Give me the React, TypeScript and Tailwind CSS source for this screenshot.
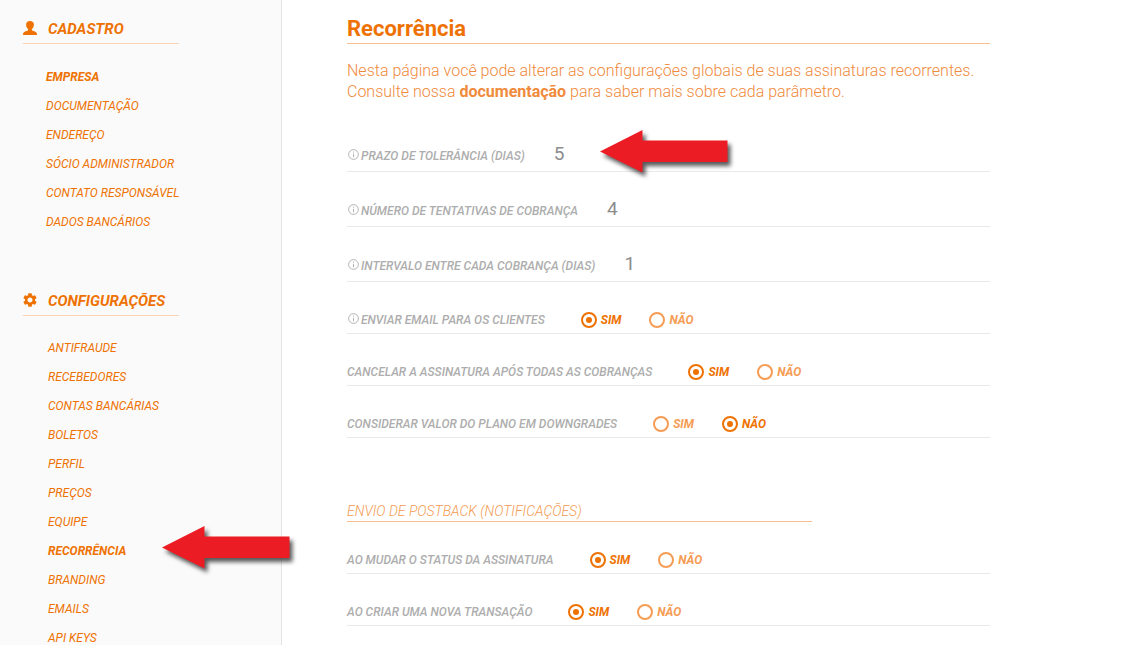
import React, { useState } from 'react';
import { MdSettings } from 'react-icons/md';

interface MenuSectionProps {
  title: string;
  icon: React.ReactNode;
  items: string[];
  active: string;
  pointed?: string;
  listClassName: string;
}

interface RadioRowProps {
  name: string;
  label: string;
  initial: 'sim' | 'nao';
  info?: boolean;
}

interface ValueRowProps {
  name: string;
  label: string;
  initial: string;
  pointed?: boolean;
}

const PersonIcon: React.FC = () => (
  <svg viewBox="0 0 14 14" className="h-[14px] w-[14px]" fill="currentColor" aria-hidden="true">
    <path d="M7 0C4.600 0 3.100 1.400 3.100 3.600c0 1.700.6 3.300 1.700 4.200.3.3.4.8.3 1.200-.1.5-.5.7-1.200 1C2.300 10.500.6 10.900.2 12.200c-.2.6-.2 1.200-.2 1.800h14c0-.6 0-1.200-.2-1.800-.4-1.300-2.100-1.700-3.700-2.200-.7-.3-1.100-.5-1.200-1-.1-.4 0-.9.3-1.200 1.100-.9 1.700-2.500 1.700-4.200C10.900 1.400 9.400 0 7 0z" />
  </svg>
);

const Arrow: React.FC = () => (
  <svg
    viewBox="0 0 136 50"
    className="h-[50px] w-[136px]"
    style={{ filter: 'drop-shadow(3px 4px 2px rgba(0, 0, 0, 0.65))' }}
    aria-hidden="true"
  >
    <path d="M0 21.500 42.500 0v10.500H127.500v21.500H42.500v10.500z" fill="#ec1c24" />
  </svg>
);

const InfoIcon: React.FC = () => (
  <svg viewBox="0 0 12 12" className="mb-1 ml-px mr-[2px] h-[11px] w-[11px]" fill="none" stroke="currentColor" aria-hidden="true">
    <circle cx="6" cy="6" r="5.3" />
    <path d="M6 5.200v3.800" />
    <circle cx="6" cy="3.400" r="0.7" fill="currentColor" stroke="none" />
  </svg>
);

const MenuSection: React.FC<MenuSectionProps> = ({ title, icon, items, active, pointed, listClassName }) => (
  <section>
    <h2 className="mx-[23px] flex h-7 w-[156px] items-center gap-[11px] border-b border-b-[#fbd3b4] text-[15px] font-bold italic text-[#ee7203]">
      <span className="shrink-0 pb-[3px]">{icon}</span>
      {title}
    </h2>
    <ul className={listClassName}>
      {items.map((item) => (
        <li key={item} className="relative h-[29px] leading-[29px]">
          <a href="#" className={item === active ? 'font-bold' : ''}>
            {item}
          </a>
          {item === pointed && (
            <span className="absolute -top-[11px] left-[114px] z-10">
              <Arrow />
            </span>
          )}
        </li>
      ))}
    </ul>
  </section>
);

const ValueRow: React.FC<ValueRowProps> = ({ name, label, initial, pointed }) => {
  const [value, setValue] = useState(initial);

  return (
    <div className="relative flex h-[55px] items-end border-b border-b-[#e9e9e9] pb-[3px]">
      <label htmlFor={name} className="flex h-6 items-center italic">
        <InfoIcon />
        {label}
      </label>
      <input
        id={name}
        value={value}
        onChange={(e) => setValue(e.target.value)}
        className="ml-[29px] h-7 w-8 text-[19px] font-normal text-[#8c8c8c] outline-none"
      />
      {pointed && (
        <span className="absolute left-[253px] top-[13px] z-10">
          <Arrow />
        </span>
      )}
    </div>
  );
};

const RadioRow: React.FC<RadioRowProps> = ({ name, label, initial, info }) => {
  const [value, setValue] = useState(initial);
  const options = [
    { id: 'sim', text: 'SIM' },
    { id: 'nao', text: 'NÃO' },
  ] as const;

  return (
    <div
      role="radiogroup"
      aria-labelledby={`${name}-label`}
      className="flex h-[52px] items-end border-b border-b-[#e9e9e9] pb-px italic"
    >
      <span id={`${name}-label`} className="flex h-6 items-center">
        {info && <InfoIcon />}
        {label}
      </span>
      <div className="ml-9 flex gap-7">
        {options.map((option) => (
          <label
            key={option.id}
            className={`flex h-6 items-center gap-1 font-bold ${value === option.id ? 'text-[#ee7203]' : 'text-[#f59c55]'}`}
          >
            <input
              type="radio"
              name={name}
              checked={value === option.id}
              onChange={() => setValue(option.id)}
              className="grid h-4 w-4 appearance-none place-items-center rounded-full border-2 border-current before:h-1.5 before:w-1.5 before:rounded-full checked:before:bg-current"
            />
            {option.text}
          </label>
        ))}
      </div>
    </div>
  );
};

const App: React.FC = () => (
  <div className="flex h-screen overflow-hidden bg-white font-[Roboto,sans-serif]">
    <nav className="w-[282px] shrink-0 border-r border-[#e4e4e4] bg-[#fafafa] pt-4 text-[12px] italic text-[#ee7203]">
      <MenuSection
        title="CADASTRO"
        icon={<PersonIcon />}
        active="EMPRESA"
        listClassName="mb-[51px] ml-[46px] mt-[19px]"
        items={['EMPRESA', 'DOCUMENTAÇÃO', 'ENDEREÇO', 'SÓCIO ADMINISTRADOR', 'CONTATO RESPONSÁVEL', 'DADOS BANCÁRIOS']}
      />
      <MenuSection
        title="CONFIGURAÇÕES"
        icon={<MdSettings viewBox="2 2 20 20" className="h-[14px] w-[14px]" />}
        active="RECORRÊNCIA"
        pointed="RECORRÊNCIA"
        listClassName="ml-[48px] mt-[18px]"
        items={[
          'ANTIFRAUDE',
          'RECEBEDORES',
          'CONTAS BANCÁRIAS',
          'BOLETOS',
          'PERFIL',
          'PREÇOS',
          'EQUIPE',
          'RECORRÊNCIA',
          'BRANDING',
          'EMAILS',
          'API KEYS',
        ]}
      />
    </nav>
    <main className="min-w-0 flex-1 pl-[65px] pr-8 pt-[14px]">
      <div className="max-w-[643px] text-[12px] font-medium text-[#adadad]">
        <h1 className="h-[30px] border-b border-b-[#f9bf90] text-[22px] font-bold leading-[30px] text-[#ee7203]">
          Recorrência
        </h1>
        <p className="mt-4 text-[16px] font-light leading-[21px] text-[#f08a3c]">
          Nesta página você pode alterar as configurações globais de suas assinaturas recorrentes. Consulte nossa{' '}
          <a href="#" className="font-bold">
            documentação
          </a>{' '}
          para saber mais sobre cada parâmetro.
        </p>
        <form className="mt-[15px]">
          <ValueRow name="prazo" label="PRAZO DE TOLERÂNCIA (DIAS)" initial="5" pointed />
          <ValueRow name="tentativas" label="NÚMERO DE TENTATIVAS DE COBRANÇA" initial="4" />
          <ValueRow name="intervalo" label="INTERVALO ENTRE CADA COBRANÇA (DIAS)" initial="1" />
          <RadioRow name="email" label="ENVIAR EMAIL PARA OS CLIENTES" initial="sim" info />
          <RadioRow name="cancelar" label="CANCELAR A ASSINATURA APÓS TODAS AS COBRANÇAS" initial="sim" />
          <RadioRow name="downgrades" label="CONSIDERAR VALOR DO PLANO EM DOWNGRADES" initial="nao" />
          <h2 className="mt-[62px] h-[22px] max-w-[465px] border-b border-b-[#f9bf90] text-[14px] font-light italic leading-[22px] text-[#f39a52]">
            ENVIO DE POSTBACK (NOTIFICAÇÕES)
          </h2>
          <RadioRow name="status" label="AO MUDAR O STATUS DA ASSINATURA" initial="sim" />
          <RadioRow name="transacao" label="AO CRIAR UMA NOVA TRANSAÇÃO" initial="sim" />
        </form>
      </div>
    </main>
  </div>
);

export default App;
